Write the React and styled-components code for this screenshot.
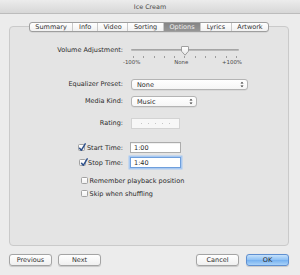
import React from 'react';
import styled, { createGlobalStyle } from 'styled-components';

const Global = createGlobalStyle`
  html, body { margin: 0; padding: 0; background: #ececec; }
  body {
    font-family: "DejaVu Sans", "Liberation Sans", sans-serif;
    font-size: 6.5px;
    color: #2b2b2b;
  }
`;

const Window = styled.div`
  width: 300px;
  height: 275px;
  background: #ececec;
  display: flex;
  flex-direction: column;
  overflow: hidden;
`;

const TitleBar = styled.div`
  height: 13px;
  flex: none;
  background: linear-gradient(#ececec, #d7d7d7);
  border-bottom: 1px solid #bcbcbc;
  display: flex;
  align-items: center;
  justify-content: center;
  font-size: 6.4px;
  color: #4a4a4a;
`;

const Body = styled.div`
  display: flex;
  flex-direction: column;
  padding: 8px 11px 0 9px;
`;

const TabRow = styled.div`
  display: flex;
  justify-content: center;
  position: relative;
  z-index: 1;
`;

const TabBar = styled.div`
  display: flex;
  height: 8px;
  border: 1px solid #9e9e9e;
  border-radius: 3px;
  overflow: hidden;
  background: linear-gradient(#ffffff, #f1f1f1);
  box-shadow: 0 0.5px 0.5px rgba(0, 0, 0, 0.12);
`;

const Tab = styled.div`
  padding: 0 5.6px;
  line-height: 8px;
  white-space: nowrap;
  border-left: ${p => (p.$first ? 'none' : '1px solid #c9c9c9')};
  background: ${p => (p.$active ? 'linear-gradient(#858585, #959595)' : 'transparent')};
  color: ${p => (p.$active ? '#efefef' : '#333')};
`;

const Panel = styled.div`
  margin-top: -6px;
  height: 220px;
  box-sizing: border-box;
  background: #e4e4e4;
  border: 1px solid #cacaca;
  border-radius: 4px;
  display: flex;
  flex-direction: column;
`;

const Row = styled.div`
  display: grid;
  grid-template-columns: 113px auto;
  column-gap: 8px;
  align-items: ${p => p.$align || 'center'};
  height: ${p => p.$h}px;
  margin-top: ${p => p.$mt}px;
`;

const Label = styled.div`
  text-align: right;
  white-space: nowrap;
  line-height: ${p => p.$lh || 11}px;
  color: ${p => (p.$dim ? '#3a3a3a' : '#2b2b2b')};
`;

const CheckLabel = styled.label`
  display: flex;
  justify-content: flex-end;
  align-items: center;
  gap: 2px;
  white-space: nowrap;
`;

const Slider = styled.div`
  width: 108px;
  display: flex;
  flex-direction: column;
`;

const TrackArea = styled.div`
  position: relative;
  height: 10px;
  display: flex;
  align-items: center;
`;

const Track = styled.div`
  flex: 1;
  height: 2px;
  margin-top: -1px;
  border-radius: 1px;
  background: linear-gradient(#9a9a9a, #c4c4c4);
`;

const Thumb = styled.svg`
  position: absolute;
  left: 50%;
  top: 1px;
  transform: translateX(-50%);
`;

const Ticks = styled.div`
  display: flex;
  justify-content: space-between;
  padding: 0 2px;
  margin-top: 1px;
`;

const Tick = styled.span`
  width: 1px;
  height: 2px;
  background: #9d9d9d;
`;

const TickLabels = styled.div`
  display: flex;
  justify-content: space-between;
  margin: 1px -3px 0 -8px;
  font-size: 5.4px;
  color: #4a4a4a;
  line-height: 6px;
`;

const Select = styled.div`
  width: ${p => p.$w}px;
  height: 11px;
  box-sizing: border-box;
  display: flex;
  align-items: center;
  justify-content: space-between;
  padding: 0 3px 0 5px;
  background: linear-gradient(#ffffff, #f6f6f6);
  border: 1px solid #b4b4b4;
  border-radius: 3px;
  box-shadow: 0 0.5px 0.5px rgba(0, 0, 0, 0.1);
`;

const RatingBox = styled.div`
  width: 49px;
  height: 11px;
  box-sizing: border-box;
  border: 1px solid #d3d3d3;
  background: #f7f7f7;
  display: flex;
  align-items: center;
  justify-content: center;
  gap: 5.5px;
`;

const Dot = styled.span`
  width: 1.5px;
  height: 1.5px;
  background: #c6c6c6;
`;

const Field = styled.div`
  width: 51px;
  height: 11px;
  box-sizing: border-box;
  padding-left: 3px;
  display: flex;
  align-items: center;
  background: #fff;
  border: 1px solid ${p => (p.$focus ? '#6f9fdc' : '#acacac')};
  box-shadow: ${p => (p.$focus ? '0 0 0 1.5px #a9c9f1' : 'inset 0 0.5px 0.5px rgba(0,0,0,0.12)')};
  margin-left: -1px;
`;

const Box = styled.span`
  position: relative;
  width: 7px;
  height: 7px;
  box-sizing: border-box;
  flex: none;
  border: 1px solid #a2a2a2;
  border-radius: 1.5px;
  background: linear-gradient(#ffffff, #f0f0f0);
`;

const Mark = styled.svg`
  position: absolute;
  left: -0.5px;
  top: -2.5px;
`;

const OptionRow = styled.label`
  display: flex;
  align-items: center;
  gap: 1.5px;
  height: 9px;
  padding-left: 71px;
  margin-top: ${p => p.$mt}px;
  white-space: nowrap;
`;

const Footer = styled.div`
  display: flex;
  justify-content: space-between;
  margin-top: 8px;
`;

const Group = styled.div`
  display: flex;
  gap: ${p => p.$gap}px;
`;

const Button = styled.div`
  width: 43px;
  height: 12px;
  box-sizing: border-box;
  display: flex;
  align-items: center;
  justify-content: center;
  border-radius: 3px;
  border: 1px solid ${p => (p.$primary ? '#5f8fd0' : '#a4a4a4')};
  background: ${p =>
    p.$primary
      ? 'linear-gradient(#c6e1fb, #8cc0f4 50%, #74b0f0 51%, #a9d2f8)'
      : 'linear-gradient(#ffffff, #f0f0f0)'};
  box-shadow: 0 0.5px 0.8px rgba(0, 0, 0, 0.15);
  color: #2e2e2e;
`;

const Arrows = () => (
  <svg width="4" height="7" viewBox="0 0 4 7">
    <path d="M0.5 2.6 L2 0.8 L3.5 2.6 Z" fill="#333" />
    <path d="M0.5 4.4 L2 6.2 L3.5 4.4 Z" fill="#333" />
  </svg>
);

const Checkbox = ({ checked }) => (
  <Box>
    {checked && (
      <Mark width="8" height="9" viewBox="0 0 8 9">
        <path d="M1.6 5.2 L3.3 7.3 L7.2 0.8" fill="none" stroke="#2b4f8c" strokeWidth="1.4" strokeLinecap="round" strokeLinejoin="round" />
      </Mark>
    )}
  </Box>
);

const tabs = ['Summary', 'Info', 'Video', 'Sorting', 'Options', 'Lyrics', 'Artwork'];

export default function App() {
  return (
    <>
      <Global />
      <Window>
        <TitleBar>Ice Cream</TitleBar>
        <Body>
          <TabRow>
            <TabBar>
              {tabs.map((t, i) => (
                <Tab key={t} $first={i === 0} $active={t === 'Options'}>
                  {t}
                </Tab>
              ))}
            </TabBar>
          </TabRow>
          <Panel>
            <Row $h={21} $mt={18} $align="start">
              <Label $lh={10}>Volume Adjustment:</Label>
              <Slider>
                <TrackArea>
                  <Track />
                  <Thumb width="9" height="10" viewBox="0 0 9 10">
                    <defs>
                      <linearGradient id="tg" x1="0" y1="0" x2="0" y2="1">
                        <stop offset="0" stopColor="#ffffff" />
                        <stop offset="1" stopColor="#e6e6e6" />
                      </linearGradient>
                    </defs>
                    <path d="M1 0.8 Q1 0.5 1.5 0.5 H7.5 Q8 0.5 8 0.8 V5.2 L4.5 9.2 L1 5.2 Z" fill="url(#tg)" stroke="#8c8c8c" strokeWidth="0.8" />
                  </Thumb>
                </TrackArea>
                <Ticks>
                  {Array.from({ length: 11 }).map((_, i) => (
                    <Tick key={i} />
                  ))}
                </Ticks>
                <TickLabels>
                  <span>-100%</span>
                  <span>None</span>
                  <span>+100%</span>
                </TickLabels>
              </Slider>
            </Row>
            <Row $h={11} $mt={13}>
              <Label>Equalizer Preset:</Label>
              <Select $w={117}>
                <span>None</span>
                <Arrows />
              </Select>
            </Row>
            <Row $h={11} $mt={6}>
              <Label>Media Kind:</Label>
              <Select $w={66}>
                <span>Music</span>
                <Arrows />
              </Select>
            </Row>
            <Row $h={11} $mt={11}>
              <Label>Rating:</Label>
              <RatingBox>
                {Array.from({ length: 5 }).map((_, i) => (
                  <Dot key={i} />
                ))}
              </RatingBox>
            </Row>
            <Row $h={11} $mt={13}>
              <CheckLabel>
                <Checkbox checked />
                <span>Start Time:</span>
              </CheckLabel>
              <Field>1:00</Field>
            </Row>
            <Row $h={11} $mt={4}>
              <CheckLabel>
                <Checkbox checked />
                <span>Stop Time:</span>
              </CheckLabel>
              <Field $focus>1:40</Field>
            </Row>
            <OptionRow $mt={8}>
              <Checkbox />
              <span>Remember playback position</span>
            </OptionRow>
            <OptionRow $mt={4}>
              <Checkbox />
              <span>Skip when shuffling</span>
            </OptionRow>
          </Panel>
          <Footer>
            <Group $gap={6}>
              <Button>Previous</Button>
              <Button>Next</Button>
            </Group>
            <Group $gap={7}>
              <Button>Cancel</Button>
              <Button $primary>OK</Button>
            </Group>
          </Footer>
        </Body>
      </Window>
    </>
  );
}
